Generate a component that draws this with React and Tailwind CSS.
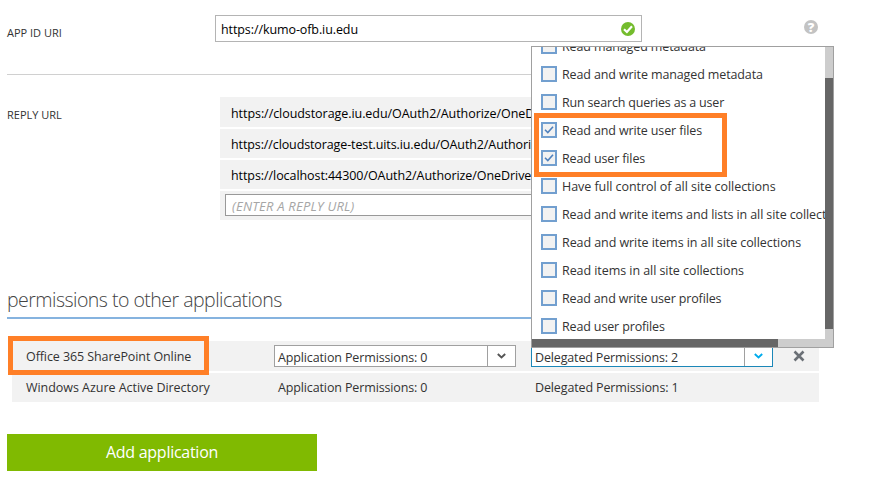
const permissions = [
  { label: 'Read managed metadata', cls: 'tracking-[-0.12px]' },
  { label: 'Read and write managed metadata', cls: 'tracking-[-0.12px]' },
  { label: 'Run search queries as a user', cls: 'tracking-[-0.18px]' },
  { label: 'Read and write user files', cls: 'tracking-[-0.13px]', checked: true },
  { label: 'Read user files', cls: 'tracking-[-0.13px]', checked: true },
  { label: 'Have full control of all site collections', cls: 'tracking-[-0.05px]' },
  { label: 'Read and write items and lists in all site collections', cls: 'tracking-[-0.1px]' },
  { label: 'Read and write items in all site collections', cls: 'tracking-[-0.07px]' },
  { label: 'Read items in all site collections', cls: 'tracking-[-0.06px]' },
  { label: 'Read and write user profiles', cls: 'tracking-[-0.15px]' },
  { label: 'Read user profiles', cls: 'tracking-[-0.14px]' },
];

const replyUrls = [
  { url: 'https://cloudstorage.iu.edu/OAuth2/Authorize/OneDrive', cls: 'h-[30px] tracking-[-0.06px]' },
  { url: 'https://cloudstorage-test.uits.iu.edu/OAuth2/Authorize/OneDrive', cls: 'h-[29px] tracking-[-0.11px]' },
  { url: 'https://localhost:44300/OAuth2/Authorize/OneDrive', cls: 'h-[29px] tracking-[-0.07px]' },
];

function Chevron({ className }) {
  return (
    <svg width="9" height="6" viewBox="0 0 9 6" className={className}>
      <path d="M0.8 1 L4.5 4.4 L8.2 1" fill="none" stroke="currentColor" strokeWidth="1.9" />
    </svg>
  );
}

function Checkbox({ checked }) {
  return (
    <span className="flex size-4 shrink-0 items-center justify-center border-2 border-[#729fcf] bg-[#f2f2f2]">
      {checked && (
        <svg width="10" height="10" viewBox="0 0 10 10">
          <path d="M1 4.8 L3.8 7.6 L9 1.8" fill="none" stroke="#4f81bd" strokeWidth="1.6" />
        </svg>
      )}
    </span>
  );
}

function PermissionMenu() {
  return (
    <div className="absolute left-[531px] top-[46px] flex h-[302px] w-[303px] flex-col border border-[#a0a0a0] bg-white">
      <div className="flex h-[292px]">
        <div className="w-[293px] overflow-hidden">
          <div className="-mt-[15px] flex flex-col pl-[9px]">
            {permissions.map((p) => (
              <label key={p.label} className="flex h-7 shrink-0 items-center gap-[5px] whitespace-nowrap">
                <Checkbox checked={p.checked} />
                <span className={'pt-[2px] ' + p.cls}>{p.label}</span>
              </label>
            ))}
          </div>
        </div>
        <div className="w-2 bg-[#cdcdcd] pt-[31px]">
          <div className="h-[251px] bg-[#666]" />
        </div>
      </div>
      <div className="h-2 bg-[#cdcdcd]">
        <div className="h-2 w-[246px] bg-[#666]" />
      </div>
    </div>
  );
}

export default function App() {
  return (
    <div className="relative h-[480px] w-[886px] overflow-hidden bg-white font-['Open_Sans','Noto_Sans',sans-serif] text-[12.5px] text-[#333]">
      <div className="flex h-[74px] pl-[7px] pt-[15px]">
        <div className="w-52 pt-[9px] text-[11px] leading-[18px]">APP ID URI</div>
        <div className="flex h-[27px] w-[427px] items-center justify-between border border-[#b4b4b4] pl-[5px] pr-[6px] text-black">
          <span className="pt-[3px] tracking-[-0.09px]">https://kumo-ofb.iu.edu</span>
          <svg width="14" height="14" viewBox="0 0 14 14">
            <circle cx="7" cy="7" r="7" fill="#74bc2d" />
            <path d="M3 7.2 L5.9 10 L11 4.3" fill="none" stroke="#fff" strokeWidth="2.2" />
          </svg>
        </div>
        <div className="ml-[162px] mt-[5px] flex size-[14px] items-center justify-center rounded-full bg-[#c3c3c3] text-[13px] font-extrabold leading-none text-white">?</div>
      </div>
      <div className="ml-[7px] h-px w-[812px] bg-[#d0d0d0]" />

      <div className="flex h-[211px] pl-[7px] pt-[22px]">
        <div className="w-[213px] pt-[9px] text-[11px] leading-[18px]">REPLY URL</div>
        <div className="flex w-[599px] flex-col gap-[2px] text-black">
          {replyUrls.map((r) => (
            <div key={r.url} className={'flex items-center whitespace-nowrap bg-[#f2f2f2] pl-[11px] pt-1 ' + r.cls}>{r.url}</div>
          ))}
          <div className="h-[29px] bg-[#f2f2f2] pl-[5px] pr-[5px] pt-[3px]">
            <div className="flex h-[22px] items-center border border-[#999] bg-white pl-[6px] pt-[3px] text-[13px] italic tracking-[0.23px] text-[#a6a6a6]">(ENTER A REPLY URL)</div>
          </div>
        </div>
      </div>

      <div className="ml-[7px] flex h-[33px] w-[812px] items-start border-b-2 border-[#86b3df]">
        <h2 className="whitespace-nowrap text-[19.5px] font-light leading-[28px] tracking-[-0.52px] text-[#444]">permissions to other applications</h2>
      </div>

      <div className="ml-3 mt-[22px] flex w-[807px] flex-col gap-[2px]">
        <div className="flex h-[30px] items-start bg-[#f2f2f2] pt-1">
          <div className="w-[262px] pl-[14px] pt-[2px] leading-[19px] tracking-[-0.09px]">Office 365 SharePoint Online</div>
          <div className="flex h-[22px] w-[242px] border border-[#a0a0a0] bg-white">
            <span className="w-[212px] pl-[3px] pt-[2px] leading-[19px] tracking-[-0.13px]">Application Permissions: 0</span>
            <span className="flex flex-1 items-center justify-center border-l border-[#a0a0a0] text-[#555]"><Chevron /></span>
          </div>
          <div className="ml-[15px] flex h-[22px] w-[242px] border border-[#1b87b8] bg-white">
            <span className="w-[212px] pl-[3px] pt-[2px] leading-[19px] tracking-[-0.15px]">Delegated Permissions: 2</span>
            <span className="flex flex-1 items-center justify-center border-l border-[#a0a0a0] text-[#00abec]"><Chevron /></span>
          </div>
          <svg width="12" height="12" viewBox="0 0 12 12" className="ml-5 mt-[5px]">
            <path d="M1.5 1.5 L10.5 10.5 M10.5 1.5 L1.5 10.5" fill="none" stroke="#6b7076" strokeWidth="2.6" />
          </svg>
        </div>
        <div className="flex h-[29px] items-center bg-[#f2f2f2] pt-[2px]">
          <div className="w-[266px] pl-[14px] tracking-[-0.04px]">Windows Azure Active Directory</div>
          <div className="w-[257px] tracking-[-0.13px]">Application Permissions: 0</div>
          <div className="tracking-[-0.13px]">Delegated Permissions: 1</div>
        </div>
      </div>

      <button className="ml-[7px] mt-8 flex h-[37px] w-[310px] items-center justify-center bg-[#80ba01] pb-px text-[16px] tracking-[-0.27px] text-white">Add application</button>

      <PermissionMenu />
      <div className="absolute left-[534px] top-[113px] h-16 w-[193px] border-[5px] border-[#ff7f27]" />
      <div className="absolute left-2 top-[336px] h-[39px] w-[201px] border-[5px] border-[#ff7f27]" />
    </div>
  );
}
